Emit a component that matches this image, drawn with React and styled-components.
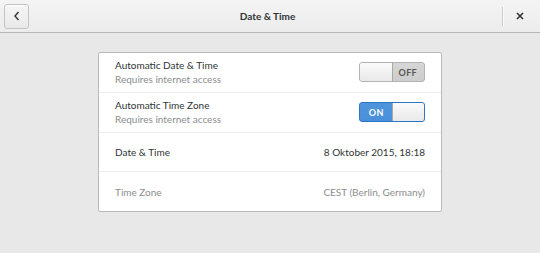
import styled, { createGlobalStyle } from 'styled-components';

const GlobalStyle = createGlobalStyle`
  html, body {
    margin: 0;
    padding: 0;
    background: #e8e8e8;
  }
  body {
    font-family: Lato, "Noto Sans", sans-serif;
    font-size: 10px;
    color: #2e3436;
  }
`;

export default function App() {
  return (
    <>
      <GlobalStyle />
      <Window>
        <HeaderBar>
          <BackButton aria-label="Back">
            <svg width="8" height="10" viewBox="0 0 8 10">
              <path d="M5.5 1 L2 5 L5.5 9" fill="none" stroke="#2e3436" strokeWidth="1.4" />
            </svg>
          </BackButton>
          <Title>Date &amp; Time</Title>
          <CloseArea>
            <Separator />
            <CloseButton aria-label="Close">
              <svg width="8" height="8" viewBox="0 0 8 8">
                <path d="M1 1 L7 7 M7 1 L1 7" stroke="#2e3436" strokeWidth="1.6" />
              </svg>
            </CloseButton>
          </CloseArea>
        </HeaderBar>
        <Content>
          <Panel>
            <Row>
              <Labels>
                <Label>Automatic Date &amp; Time</Label>
                <SubLabel>Requires internet access</SubLabel>
              </Labels>
              <Switch $on={false} />
            </Row>
            <Row>
              <Labels>
                <Label>Automatic Time Zone</Label>
                <SubLabel>Requires internet access</SubLabel>
              </Labels>
              <Switch $on />
            </Row>
            <Row>
              <Label>Date &amp; Time</Label>
              <Value>8 Oktober 2015, 18:18</Value>
            </Row>
            <Row>
              <Label $dim>Time Zone</Label>
              <Value $dim>CEST (Berlin, Germany)</Value>
            </Row>
          </Panel>
        </Content>
      </Window>
    </>
  );
}

function Switch({ $on }) {
  return (
    <SwitchTrack $on={$on}>
      {$on ? <SwitchText $on>ON</SwitchText> : <Knob />}
      {$on ? <Knob /> : <SwitchText>OFF</SwitchText>}
    </SwitchTrack>
  );
}

const Window = styled.div`
  width: 540px;
  height: 253px;
  display: flex;
  flex-direction: column;
`;

const HeaderBar = styled.header`
  height: 33px;
  box-sizing: border-box;
  display: flex;
  align-items: center;
  padding: 0 4px;
  background: linear-gradient(#f4f4f4, #ececec);
  border-bottom: 1px solid #b6b6b3;
`;

const BackButton = styled.button`
  width: 25px;
  height: 25px;
  box-sizing: border-box;
  padding: 0;
  display: flex;
  align-items: center;
  justify-content: center;
  border: 1px solid #c4c4c2;
  border-radius: 3px;
  background: linear-gradient(#f6f6f6, #e9e9e9);
  box-shadow: inset 0 1px #ffffff;
`;

const Title = styled.h1`
  flex: 1;
  margin: 0;
  text-align: center;
  font-size: 10px;
  font-weight: 700;
  color: #2e3436;
  padding-left: 4px;
`;

const CloseArea = styled.div`
  display: flex;
  align-items: center;
  height: 100%;
`;

const Separator = styled.div`
  width: 1px;
  height: 19px;
  background: #cdcdcb;
  box-shadow: 1px 0 #fafafa;
`;

const CloseButton = styled.button`
  width: 33px;
  height: 25px;
  padding: 0;
  border: none;
  background: none;
  display: flex;
  align-items: center;
  justify-content: center;
`;

const Content = styled.main`
  flex: 1;
  display: flex;
  justify-content: center;
  padding-top: 19px;
`;

const Panel = styled.section`
  width: 344px;
  height: 160px;
  box-sizing: border-box;
  background: #ffffff;
  border: 1px solid #b9b9b7;
  border-radius: 2px;
  display: flex;
  flex-direction: column;
`;

const Row = styled.div`
  flex: 1;
  display: flex;
  align-items: center;
  justify-content: space-between;
  padding: 0 16px;

  & + & {
    border-top: 1px solid #ededed;
  }
`;

const Labels = styled.div`
  display: flex;
  flex-direction: column;
  gap: 2px;
`;

const Label = styled.span`
  font-size: 10px;
  color: ${(p) => (p.$dim ? '#8b8e8f' : '#2e3436')};
`;

const SubLabel = styled.span`
  font-size: 10px;
  color: #8b8e8f;
`;

const Value = styled.span`
  font-size: 10px;
  color: ${(p) => (p.$dim ? '#8b8e8f' : '#2e3436')};
`;

const SwitchTrack = styled.div`
  width: 66px;
  height: 20px;
  box-sizing: border-box;
  display: flex;
  border: 1px solid ${(p) => (p.$on ? '#2a76c6' : '#b3b3b1')};
  border-radius: 3px;
  background: ${(p) => (p.$on ? 'linear-gradient(#4f95de, #4a8fd9)' : 'linear-gradient(#d6d6d6, #cdcdcd)')};
  overflow: hidden;
`;

const Knob = styled.div`
  flex: 1;
  background: linear-gradient(#fbfbfb, #e8e8e8);
  border-left: 1px solid #a9a9a7;
  border-right: 1px solid #a9a9a7;
  margin: -1px;

  &:first-child {
    border-left: none;
  }
  &:last-child {
    border-right: none;
  }
`;

const SwitchText = styled.span`
  flex: 1;
  display: flex;
  align-items: center;
  justify-content: center;
  font-size: 9px;
  font-weight: 700;
  letter-spacing: 0.3px;
  color: ${(p) => (p.$on ? '#ffffff' : '#555753')};
`;
